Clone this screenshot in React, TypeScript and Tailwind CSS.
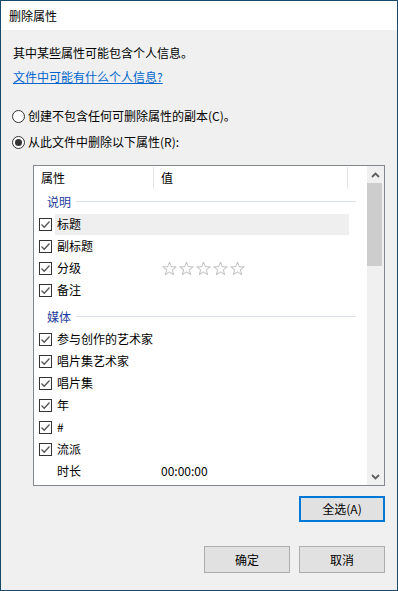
import React from 'react';

const font = { fontFamily: '"Segoe UI", "Noto Sans CJK SC", "Noto Sans", sans-serif' };

const Check = () => (
  <div className="w-[13px] h-[13px] border border-[#333333] bg-white flex items-center justify-center shrink-0">
    <svg width="11" height="11" viewBox="0 0 11 11">
      <path d="M1.5 5.5 L4.2 8.2 L9.5 2.5" fill="none" stroke="#555555" strokeWidth="1.3" />
    </svg>
  </div>
);

const Radio = ({ on }: { on?: boolean }) => (
  <div className="w-[13px] h-[13px] rounded-full border border-[#333333] bg-white flex items-center justify-center shrink-0">
    {on && <div className="w-[7px] h-[7px] rounded-full bg-[#333333]" />}
  </div>
);

const Star = () => (
  <svg width="15" height="15" viewBox="0 0 16 16" className="shrink-0">
    <path
      d="M8 1.2 L9.9 6 L15 6.2 L11 9.4 L12.4 14.5 L8 11.6 L3.6 14.5 L5 9.4 L1 6.2 L6.1 6 Z"
      fill="none"
      stroke="#c4c4c4"
      strokeWidth="1.1"
      strokeLinejoin="round"
    />
  </svg>
);

const Group = ({ label, first }: { label: string; first?: boolean }) => (
  <div className={`h-[23px] flex items-center pl-[13px] pr-[11px] ${first ? '' : 'mt-[4px]'}`}>
    <span className="text-[#1e3c9c]">{label}</span>
    <div className="flex-1 ml-[5px] h-px bg-[#d8dde8]" />
  </div>
);

const Row = ({
  label,
  value,
  checked = true,
  hover,
}: {
  label: string;
  value?: React.ReactNode;
  checked?: boolean;
  hover?: boolean;
}) => (
  <div className="h-[22px] flex items-center pl-[5px]">
    {checked ? <Check /> : <div className="w-[13px] shrink-0" />}
    <div className={`ml-[3px] w-[294px] h-[21px] flex items-center pl-[2px] ${hover ? 'bg-[#efefef]' : ''}`}>
      <span className="w-[104px] shrink-0">{label}</span>
      {value}
    </div>
  </div>
);

const Chevron = ({ down }: { down?: boolean }) => (
  <svg width="9" height="6" viewBox="0 0 9 6">
    <path
      d={down ? 'M1 1 L4.5 4.5 L8 1' : 'M1 5 L4.5 1.5 L8 5'}
      fill="none"
      stroke="#606060"
      strokeWidth="1.8"
    />
  </svg>
);

const Button = ({ children, focus }: { children: React.ReactNode; focus?: boolean }) => (
  <button
    className={`w-[86px] flex items-center justify-center bg-[#e1e1e1] text-black ${
      focus ? 'h-[26px] border-2 border-[#0078d7]' : 'h-[27px] border border-[#adadad]'
    }`}
  >
    {children}
  </button>
);

export default function App() {
  return (
    <div
      style={font}
      className="w-[398px] h-[591px] border border-[#17496b] bg-[#f0f0f0] flex flex-col text-[12px] leading-[16px] text-black overflow-hidden"
    >
      <div className="h-[29px] bg-white pl-[8px] flex items-center shrink-0">删除属性</div>

      <div className="flex-1 pl-[12px] pr-[12px] pt-[15px] flex flex-col">
        <p>其中某些属性可能包含个人信息。</p>
        <a className="mt-[8px] text-[#0066cc] underline self-start">文件中可能有什么个人信息?</a>

        <div className="mt-[23px] flex items-center -ml-[1px]">
          <Radio />
          <span className="ml-[3px]">创建不包含任何可删除属性的副本(C)。</span>
        </div>
        <div className="mt-[10px] flex items-center -ml-[1px]">
          <Radio on />
          <span className="ml-[3px]">从此文件中删除以下属性(R):</span>
        </div>

        <div className="mt-[15px] ml-[20px] w-[352px] h-[321px] border border-[#828790] bg-white flex overflow-hidden">
          <div className="flex-1 flex flex-col">
            <div className="h-[24px] flex items-stretch shrink-0">
              <div className="w-[120px] pl-[7px] flex items-center border-r border-[#e5e5e5] my-[1px]">属性</div>
              <div className="w-[194px] pl-[7px] flex items-center border-r border-[#e5e5e5] my-[1px]">值</div>
            </div>
            <Group label="说明" first />
            <Row label="标题" hover />
            <Row label="副标题" />
            <Row
              label="分级"
              value={
                <div className="flex gap-[2px] ml-[1px]">
                  <Star />
                  <Star />
                  <Star />
                  <Star />
                  <Star />
                </div>
              }
            />
            <Row label="备注" />
            <Group label="媒体" />
            <Row label="参与创作的艺术家" />
            <Row label="唱片集艺术家" />
            <Row label="唱片集" />
            <Row label="年" />
            <Row label="#" />
            <Row label="流派" />
            <Row label="时长" checked={false} value={<span>00:00:00</span>} />
          </div>

          <div className="w-[17px] bg-[#f0f0f0] flex flex-col shrink-0">
            <div className="h-[17px] flex items-center justify-center">
              <Chevron />
            </div>
            <div className="h-[83px] mr-[2px] bg-[#cdcdcd]" />
            <div className="flex-1" />
            <div className="h-[17px] flex items-center justify-center">
              <Chevron down />
            </div>
          </div>
        </div>

        <div className="mt-[10px] flex justify-end">
          <Button focus>全选(A)</Button>
        </div>

        <div className="mt-[24px] flex justify-end gap-[9px]">
          <Button>确定</Button>
          <Button>取消</Button>
        </div>
      </div>
    </div>
  );
}
